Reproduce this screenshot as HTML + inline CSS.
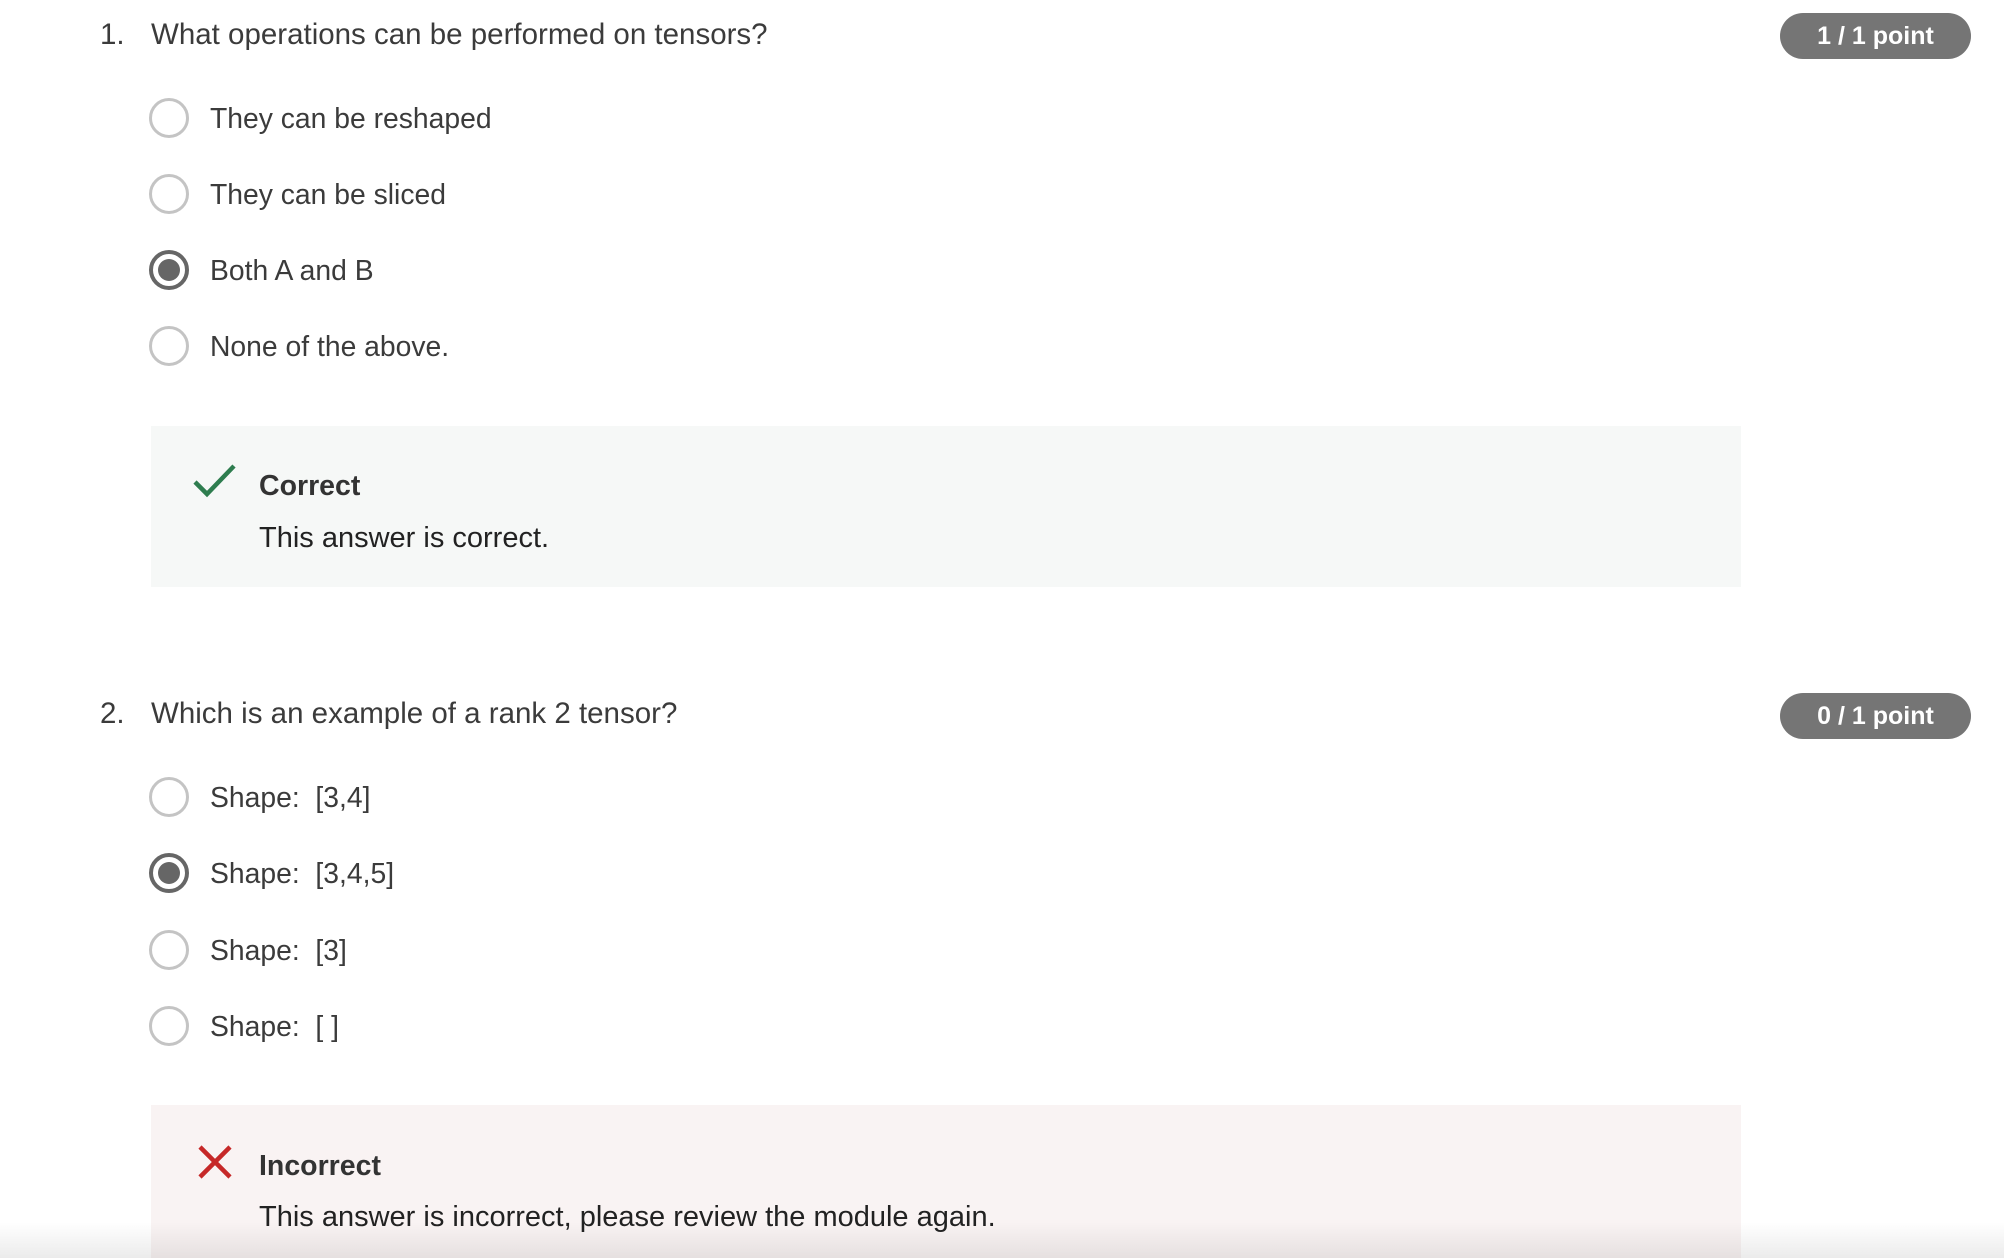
<!DOCTYPE html>
<html><head><meta charset="utf-8"><style>
body{margin:0;width:2004px;height:1258px;overflow:hidden;background:#fff;font-family:"Liberation Sans",sans-serif;color:#333;position:relative}
.a{position:absolute;white-space:nowrap;line-height:1}
.q{font-size:29.5px;color:#3b3b3b}
.o{font-size:28.3px;color:#3b3b3b;left:210px}
.r{position:absolute;left:149px;width:34px;height:34px;border:3px solid #c4c4c4;border-radius:50%;box-sizing:content-box}
.r.s{border:4px solid #666;width:32px;height:32px}
.r.s:after{content:"";position:absolute;left:5px;top:5px;width:22px;height:22px;border-radius:50%;background:#666}
.b{position:absolute;left:1780px;width:191px;height:46px;border-radius:23px;background:#757575;color:#fff;font-weight:bold;font-size:25px;line-height:46px;text-align:center}
.box{position:absolute;left:151px;width:1590px}
.t{font-size:28.5px;font-weight:bold;color:#333}
.d{font-size:29px;color:#222}
</style></head><body>
<div class="a q" style="left:100px;top:20px">1.</div>
<div class="a q" style="left:151px;top:20px">What operations can be performed on tensors?</div>
<div class="b" style="top:13px">1 / 1 point</div>
<div class="r" style="top:98px"></div><div class="a o" style="top:104px">They can be reshaped</div>
<div class="r" style="top:174px"></div><div class="a o" style="top:180px">They can be sliced</div>
<div class="r s" style="top:250px"></div><div class="a o" style="top:256px">Both A and B</div>
<div class="r" style="top:326px"></div><div class="a o" style="top:332px">None of the above.</div>
<div class="box" style="top:426px;height:161px;background:#f6f8f7"></div>
<svg class="a" style="left:192px;top:462px" width="46" height="38" viewBox="0 0 46 38"><path d="M3 20 L15 32 L42 4" fill="none" stroke="#2e7d4f" stroke-width="4.5"/></svg>
<div class="a t" style="left:259px;top:472px">Correct</div>
<div class="a d" style="left:259px;top:524px">This answer is correct.</div>

<div class="a q" style="left:100px;top:699px">2.</div>
<div class="a q" style="left:151px;top:699px">Which is an example of a rank 2 tensor?</div>
<div class="b" style="top:693px">0 / 1 point</div>
<div class="r" style="top:777px"></div><div class="a o" style="top:783px">Shape:&nbsp; [3,4]</div>
<div class="r s" style="top:853px"></div><div class="a o" style="top:859px">Shape:&nbsp; [3,4,5]</div>
<div class="r" style="top:930px"></div><div class="a o" style="top:936px">Shape:&nbsp; [3]</div>
<div class="r" style="top:1006px"></div><div class="a o" style="top:1012px">Shape:&nbsp; [ ]</div>
<div class="box" style="top:1105px;height:153px;background:#f9f3f3"></div>
<svg class="a" style="left:197px;top:1144px" width="36" height="36" viewBox="0 0 36 36"><path d="M3 3 L33 33 M33 3 L3 33" stroke="#c62828" stroke-width="4.5"/></svg>
<div class="a t" style="left:259px;top:1152px">Incorrect</div>
<div class="a d" style="left:259px;top:1203px">This answer is incorrect, please review the module again.</div>
<div style="position:absolute;left:0;top:1222px;width:2004px;height:36px;background:linear-gradient(rgba(0,0,0,0),rgba(0,0,0,0.08))"></div>
</body></html>
